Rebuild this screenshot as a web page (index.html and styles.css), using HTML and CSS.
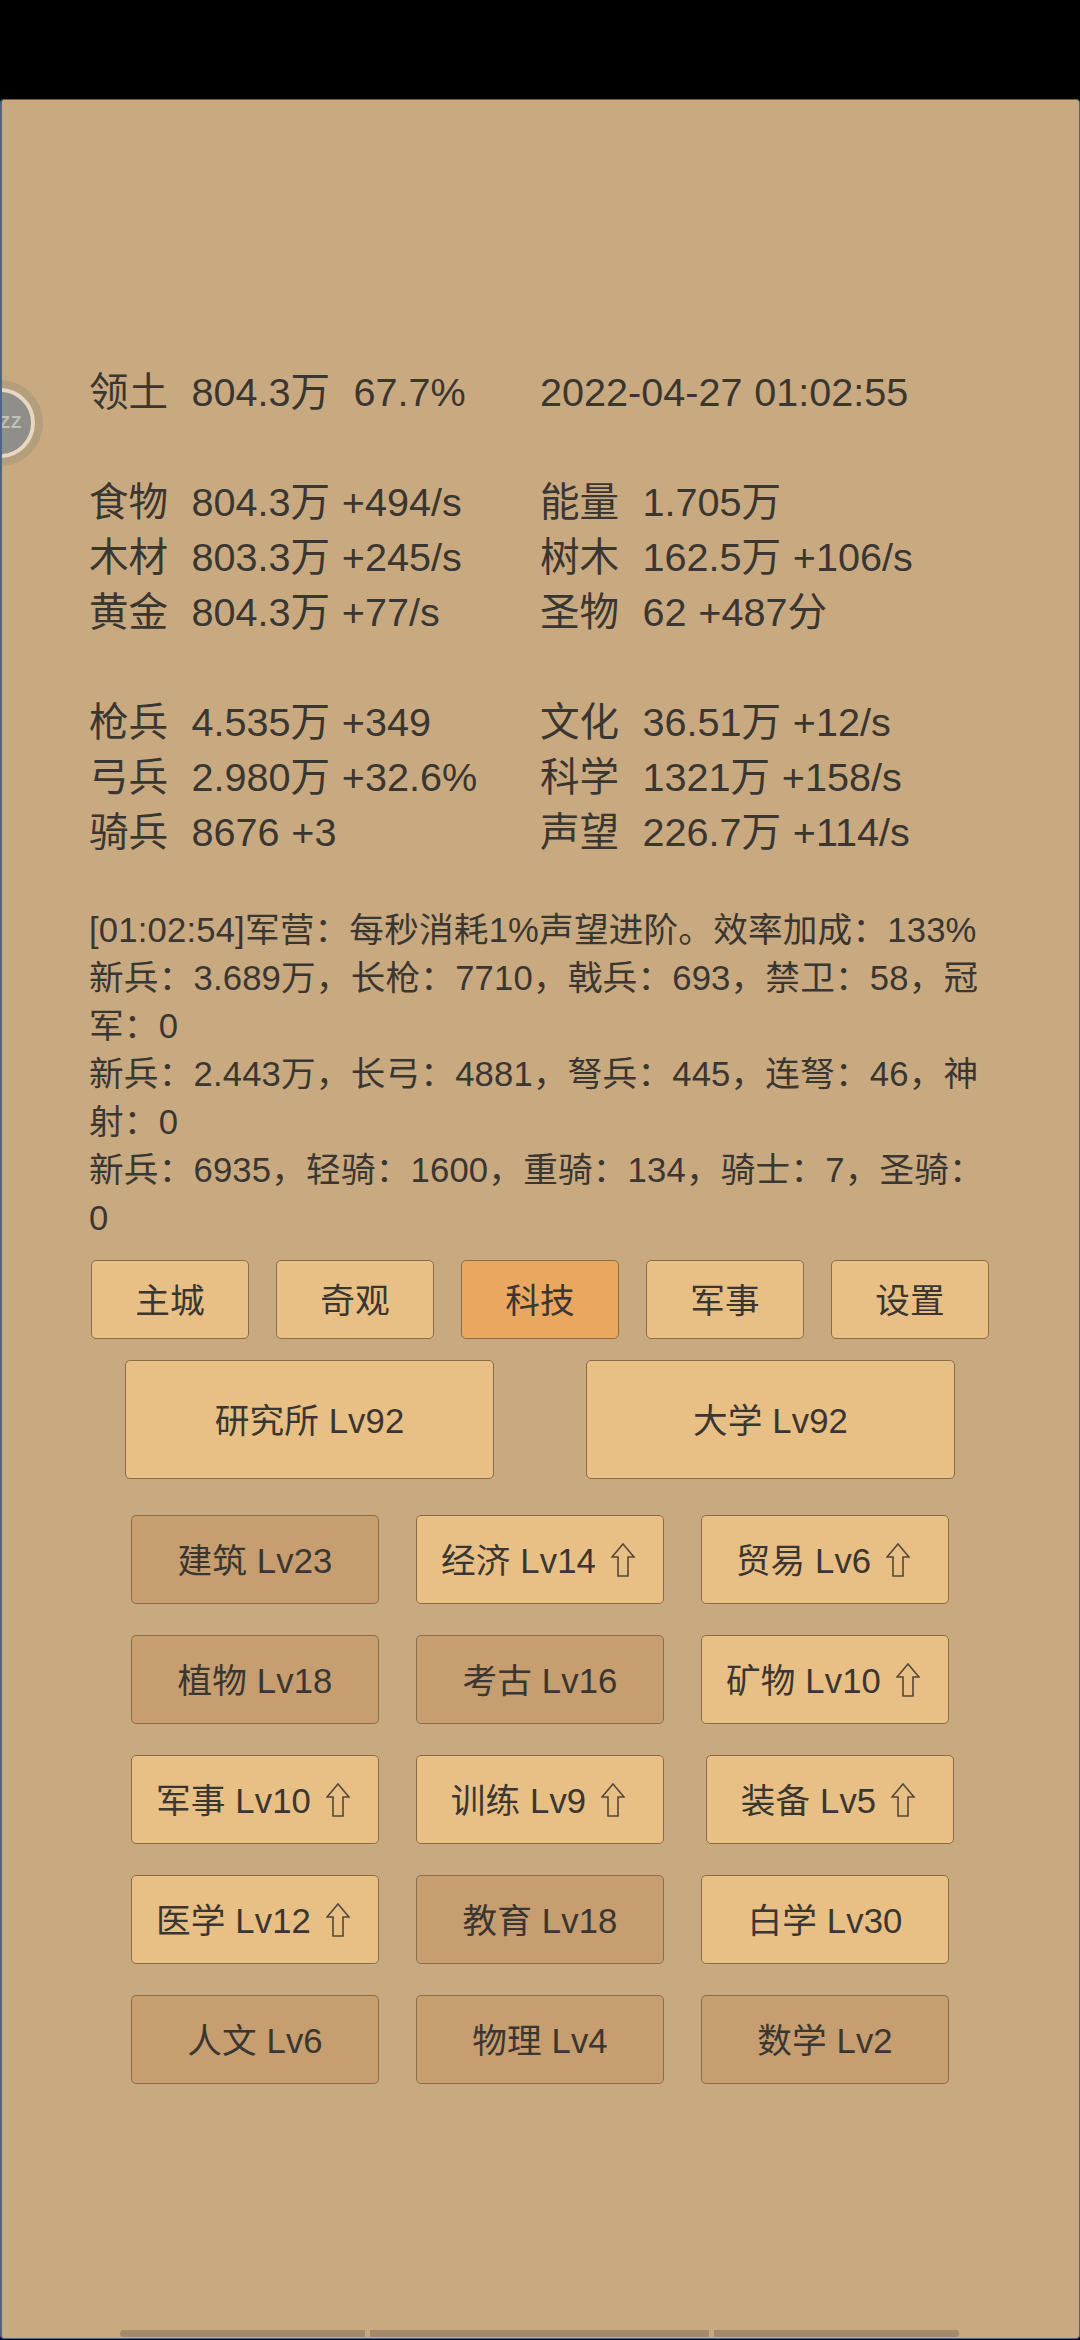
FILE: index.html
```html
<!DOCTYPE html>
<html lang="zh-CN">
<head>
<meta charset="utf-8">
<title>科技</title>
<link rel="stylesheet" href="styles.css">
</head>
<body>
<div class="top-bar"></div>
<main class="panel">
  <div class="orb"><span class="orb-text">ZZ</span></div>
  <section class="stats">
    <div class="stat-row"><div class="stat">领土&nbsp; 804.3万&nbsp; 67.7%</div><div class="stat">2022-04-27 01:02:55</div></div>
    <div class="stat-row blank"></div>
    <div class="stat-row"><div class="stat">食物&nbsp; 804.3万 +494/s</div><div class="stat">能量&nbsp; 1.705万</div></div>
    <div class="stat-row"><div class="stat">木材&nbsp; 803.3万 +245/s</div><div class="stat">树木&nbsp; 162.5万 +106/s</div></div>
    <div class="stat-row"><div class="stat">黄金&nbsp; 804.3万 +77/s</div><div class="stat">圣物&nbsp; 62 +487分</div></div>
    <div class="stat-row blank"></div>
    <div class="stat-row"><div class="stat">枪兵&nbsp; 4.535万 +349</div><div class="stat">文化&nbsp; 36.51万 +12/s</div></div>
    <div class="stat-row"><div class="stat">弓兵&nbsp; 2.980万 +32.6%</div><div class="stat">科学&nbsp; 1321万 +158/s</div></div>
    <div class="stat-row"><div class="stat">骑兵&nbsp; 8676 +3</div><div class="stat">声望&nbsp; 226.7万 +114/s</div></div>
  </section>
  <section class="log">
    <div>[01:02:54]军营：每秒消耗1%声望进阶。效率加成：133%</div>
    <div>新兵：3.689万，长枪：7710，戟兵：693，禁卫：58，冠军：0</div>
    <div>新兵：2.443万，长弓：4881，弩兵：445，连弩：46，神射：0</div>
    <div>新兵：6935，轻骑：1600，重骑：134，骑士：7，圣骑：0</div>
  </section>
  <nav class="tabs">
    <button class="btn tab">主城</button>
    <button class="btn tab">奇观</button>
    <button class="btn tab active">科技</button>
    <button class="btn tab">军事</button>
    <button class="btn tab">设置</button>
  </nav>
  <div class="buildings">
    <button class="btn building">研究所 Lv92</button>
    <button class="btn building">大学 Lv92</button>
  </div>
  <div class="tech-grid">
    <div class="tech-row">
      <button class="btn tech done">建筑 Lv23</button>
      <button class="btn tech">经济 Lv14<svg class="up" viewBox="0 0 24 34"><path d="M12 1 L23 14 H17 V33 H7 V14 H1 Z"/></svg></button>
      <button class="btn tech">贸易 Lv6<svg class="up" viewBox="0 0 24 34"><path d="M12 1 L23 14 H17 V33 H7 V14 H1 Z"/></svg></button>
    </div>
    <div class="tech-row">
      <button class="btn tech done">植物 Lv18</button>
      <button class="btn tech done">考古 Lv16</button>
      <button class="btn tech">矿物 Lv10<svg class="up" viewBox="0 0 24 34"><path d="M12 1 L23 14 H17 V33 H7 V14 H1 Z"/></svg></button>
    </div>
    <div class="tech-row shifted">
      <button class="btn tech">军事 Lv10<svg class="up" viewBox="0 0 24 34"><path d="M12 1 L23 14 H17 V33 H7 V14 H1 Z"/></svg></button>
      <button class="btn tech">训练 Lv9<svg class="up" viewBox="0 0 24 34"><path d="M12 1 L23 14 H17 V33 H7 V14 H1 Z"/></svg></button>
      <button class="btn tech">装备 Lv5<svg class="up" viewBox="0 0 24 34"><path d="M12 1 L23 14 H17 V33 H7 V14 H1 Z"/></svg></button>
    </div>
    <div class="tech-row">
      <button class="btn tech">医学 Lv12<svg class="up" viewBox="0 0 24 34"><path d="M12 1 L23 14 H17 V33 H7 V14 H1 Z"/></svg></button>
      <button class="btn tech done">教育 Lv18</button>
      <button class="btn tech">白学 Lv30</button>
    </div>
    <div class="tech-row">
      <button class="btn tech done">人文 Lv6</button>
      <button class="btn tech done">物理 Lv4</button>
      <button class="btn tech done">数学 Lv2</button>
    </div>
  </div>
  <div class="scrollbar">
    <span class="seg seg-a"></span>
    <span class="seg seg-b"></span>
    <span class="seg seg-c"></span>
  </div>
</main>
</body>
</html>
```
FILE: styles.css
```css
* { box-sizing: border-box; }
html, body { margin: 0; height: 100%; }
body {
  width: 1080px;
  height: 2340px;
  background: #000;
  display: flex;
  flex-direction: column;
  overflow: hidden;
  font-family: "Liberation Sans", "Noto Sans CJK SC", sans-serif;
  color: #3a3631;
}
.top-bar { height: 99px; flex: none; background: #000; }
.panel {
  position: relative;
  flex: 1;
  padding: 265px 0 0 87px;
  background: #c9aa80;
  border: 1px solid #4f6484;
  border-left-width: 2px;
  border-radius: 4px;
  margin-bottom: 1px;
  overflow: hidden;
}
.orb {
  position: absolute;
  left: -45px;
  top: 280px;
  width: 86px;
  height: 86px;
  border-radius: 50%;
  background: #b59e7b;
  display: flex;
  align-items: center;
  justify-content: center;
}
.orb::before {
  content: "";
  position: absolute;
  inset: 8px;
  border-radius: 50%;
  border: 4px solid #e7d8bf;
  background: radial-gradient(circle at 50% 50%, #8f8e88 0 68%, #6c8cae 88%);
}
.orb-text {
  position: relative;
  margin-left: 22px;
  font-size: 17px;
  font-weight: 700;
  letter-spacing: 1px;
  color: #c3c0b6;
}
.stats { font-size: 39.6px; line-height: 55px; word-spacing: 0.7px; }
.stat-row { display: flex; height: 55px; white-space: pre; }
.stat { width: 451px; flex: none; }
.log {
  width: 896px;
  margin-top: 46px;
  font-size: 34.65px;
  line-height: 48px;
  letter-spacing: 0.18px;
}
.btn {
  display: block;
  padding: 0 0 3px;
  font: inherit;
  color: inherit;
  letter-spacing: 0.12px;
  background: #e8bf85;
  border: 1px solid #8a6c47;
  border-radius: 5px;
}
.tabs {
  display: flex;
  gap: 27px;
  margin: 18px 0 0 2px;
  font-size: 34.65px;
}
.tab { width: 158px; height: 79px; }
.tab.active { background: #eaa75f; }
.buildings {
  display: flex;
  gap: 92px;
  margin: 21px 0 0 36px;
  font-size: 34.65px;
}
.building { width: 369px; height: 119px; }
.tech-grid {
  display: flex;
  flex-direction: column;
  gap: 31px;
  margin: 36px 0 0 42px;
  font-size: 34.65px;
}
.tech-row { display: flex; gap: 37px; }
.tech { width: 248px; height: 89px; }
.tech.done { background: #c69e70; }
.tech-row.shifted .tech:last-child { margin-left: 5px; }
.up {
  width: 24px;
  height: 34px;
  margin: 0 4px 0 15px;
  vertical-align: -4px;
  fill: none;
  stroke: #54473a;
  stroke-width: 1.6;
}
.scrollbar {
  position: absolute;
  left: 118px;
  bottom: 1px;
  display: flex;
  gap: 5px;
}
.seg { display: block; height: 7px; background: #a38a6a; }
.seg-a { width: 245px; border-radius: 4px 0 0 4px; }
.seg-b { width: 339px; }
.seg-c { width: 245px; border-radius: 0 4px 4px 0; }
```
